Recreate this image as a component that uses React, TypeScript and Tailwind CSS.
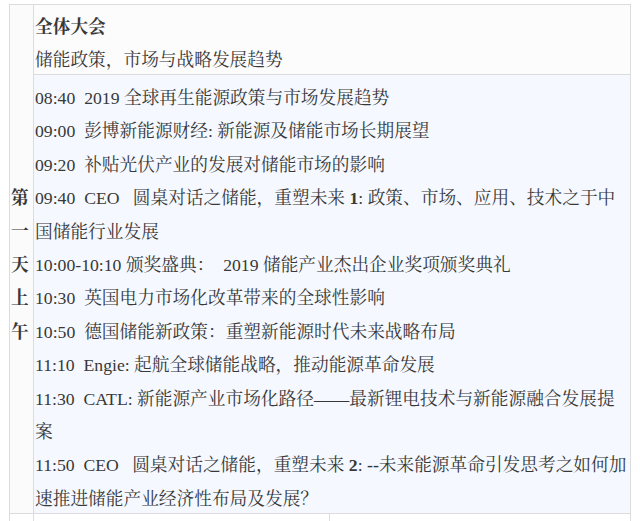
export default function App() {
  const serif = { fontFamily: '"Liberation Serif", "Noto Serif CJK SC", "Noto Sans CJK SC", serif' }

  const lines: React.ReactNode[] = [
    <>08:40{'\u00a0 '}2019 全球再生能源政策与市场发展趋势</>,
    <>09:00{'\u00a0 '}彭博新能源财经: 新能源及储能市场长期展望</>,
    <>09:20{'\u00a0 '}补贴光伏产业的发展对储能市场的影响</>,
    <>09:40{'\u00a0 '}CEO{'\u00a0\u00a0 '}圆桌对话之储能，重塑未来 <b>1</b>: 政策、市场、应用、技术之于中</>,
    <>国储能行业发展</>,
    <>10:00-10:10 颁奖盛典：{'\u00a0 '}2019 储能产业杰出企业奖项颁奖典礼</>,
    <>10:30{'\u00a0 '}英国电力市场化改革带来的全球性影响</>,
    <>10:50{'\u00a0 '}德国储能新政策：重塑新能源时代未来战略布局</>,
    <>11:10{'\u00a0 '}Engie: 起航全球储能战略，推动能源革命发展</>,
    <>11:30{'\u00a0 '}CATL: 新能源产业市场化路径——最新锂电技术与新能源融合发展提</>,
    <>案</>,
    <>11:50{'\u00a0 '}CEO{'\u00a0\u00a0 '}圆桌对话之储能，重塑未来 <b>2</b>: <b>--</b>未来能源革命引发思考之如何加</>,
    <>速推进储能产业经济性布局及发展？</>,
  ]

  return (
    <div className="w-[640px] h-[521px] overflow-hidden bg-white pt-[4px] text-[#383838]" style={serif}>
      <div className="ml-[9px] w-[622px] border-l border-t border-r border-[#dcdcdc]">
        <div className="flex">
          {/* day label column */}
          <div className="w-[24px] h-[509px] shrink-0 border-r border-b border-[#dcdcdc] bg-[#fbfbfb] pt-[177px] pl-[1px] text-[17.7px] leading-[33.4px] font-bold">
            {['第', '一', '天', '上', '午'].map((c) => (
              <div key={c}>{c}</div>
            ))}
          </div>

          <div className="flex-1 flex flex-col">
            <div className="h-[70px] border-b border-[#dcdcdc] bg-[#fcfcfc] pt-[6px] pl-[1px] text-[17.7px] leading-[33.4px]">
              <div className="font-bold">全体大会</div>
              <div>储能政策，市场与战略发展趋势</div>
            </div>
            <div className="h-[439px] border-b border-[#dcdcdc] bg-[#f5f9ff] pt-[7px] pl-[1px] text-[17.7px] leading-[33.4px]">
              {lines.map((l, i) => (
                <div key={i} className="whitespace-nowrap">
                  {l}
                </div>
              ))}
            </div>
          </div>
        </div>

        {/* next row, cut off */}
        <div className="flex h-[10px]">
          <div className="w-[24px] border-r border-[#dcdcdc]" />
          <div className="w-[296px] border-r border-[#dcdcdc]" />
          <div className="flex-1" />
        </div>
      </div>
    </div>
  )
}
